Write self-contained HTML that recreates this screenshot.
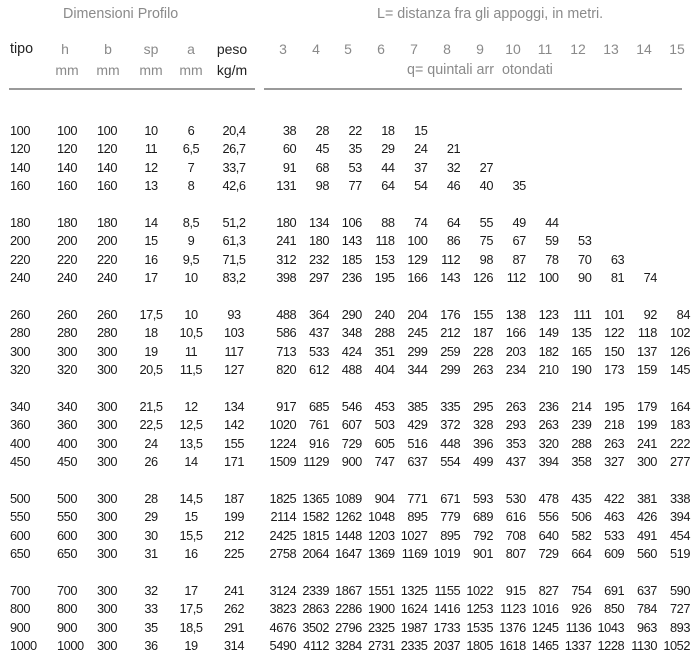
<!DOCTYPE html>
<html><head><meta charset="utf-8"><style>
body{margin:0;width:700px;height:658px;background:#fff;font-family:"Liberation Sans",sans-serif;position:relative;overflow:hidden}
.g{color:#8a8a8a}
.a{position:absolute;font-size:14.3px;line-height:16px;white-space:nowrap}
.c{position:absolute;font-size:14px;line-height:16px;width:40px;text-align:center}
table{position:absolute;left:0;top:122px;border-collapse:collapse;table-layout:fixed;width:690px;font-size:12.8px;color:#1a1a1a;letter-spacing:-0.45px}
td{padding:0;height:18.4px;line-height:18.4px;white-space:nowrap;text-align:right}
td:nth-child(1){text-align:left;padding-left:10px}
td:nth-child(2){text-align:left;padding-left:5px}
td:nth-child(3){text-align:left;padding-left:5px}
td:nth-child(4),td:nth-child(5),td:nth-child(6){text-align:center}
.hl{position:absolute;top:88px;height:1.5px;background:#9a9a9a}
</style></head><body>
<div class="a g" style="left:63px;top:6px">Dimensioni Profilo</div>
<div class="a g" style="left:377px;top:6px">L= distanza fra gli appoggi, in metri.</div>
<div class="a" style="left:10px;top:41px;color:#222">tipo</div>
<div class="c g" style="left:45px;top:41px">h</div>
<div class="c g" style="left:88px;top:41px">b</div>
<div class="c g" style="left:131px;top:41px">sp</div>
<div class="c g" style="left:171px;top:41px">a</div>
<div class="c" style="left:212px;top:41px;color:#222">peso</div>
<div class="c g" style="left:47px;top:62px">mm</div>
<div class="c g" style="left:88px;top:62px">mm</div>
<div class="c g" style="left:131px;top:62px">mm</div>
<div class="c g" style="left:171px;top:62px">mm</div>
<div class="c" style="left:212px;top:62px;color:#222">kg/m</div>
<div class="c g" style="left:263px;top:41px">3</div>
<div class="c g" style="left:296px;top:41px">4</div>
<div class="c g" style="left:328px;top:41px">5</div>
<div class="c g" style="left:361px;top:41px">6</div>
<div class="c g" style="left:394px;top:41px">7</div>
<div class="c g" style="left:427px;top:41px">8</div>
<div class="c g" style="left:460px;top:41px">9</div>
<div class="c g" style="left:493px;top:41px">10</div>
<div class="c g" style="left:525px;top:41px">11</div>
<div class="c g" style="left:558px;top:41px">12</div>
<div class="c g" style="left:591px;top:41px">13</div>
<div class="c g" style="left:624px;top:41px">14</div>
<div class="c g" style="left:657px;top:41px">15</div>
<div class="a g" style="left:407px;top:62px">q= quintali arr&nbsp;&nbsp;otondati</div>
<div class="hl" style="left:9px;width:246px"></div>
<div class="hl" style="left:264px;width:418px"></div>
<table>
<colgroup><col style="width:52px"><col style="width:40px"><col style="width:40px"><col style="width:38px"><col style="width:42px"><col style="width:44px"><col style="width:40.2px"><col style="width:32.8px"><col style="width:32.8px"><col style="width:32.8px"><col style="width:32.8px"><col style="width:32.8px"><col style="width:32.8px"><col style="width:32.8px"><col style="width:32.8px"><col style="width:32.8px"><col style="width:32.8px"><col style="width:32.8px"><col style="width:32.8px"></colgroup>
<tr><td>100</td><td>100</td><td>100</td><td>10</td><td>6</td><td>20,4</td><td>38</td><td>28</td><td>22</td><td>18</td><td>15</td><td></td><td></td><td></td><td></td><td></td><td></td><td></td><td></td></tr>
<tr><td>120</td><td>120</td><td>120</td><td>11</td><td>6,5</td><td>26,7</td><td>60</td><td>45</td><td>35</td><td>29</td><td>24</td><td>21</td><td></td><td></td><td></td><td></td><td></td><td></td><td></td></tr>
<tr><td>140</td><td>140</td><td>140</td><td>12</td><td>7</td><td>33,7</td><td>91</td><td>68</td><td>53</td><td>44</td><td>37</td><td>32</td><td>27</td><td></td><td></td><td></td><td></td><td></td><td></td></tr>
<tr><td>160</td><td>160</td><td>160</td><td>13</td><td>8</td><td>42,6</td><td>131</td><td>98</td><td>77</td><td>64</td><td>54</td><td>46</td><td>40</td><td>35</td><td></td><td></td><td></td><td></td><td></td></tr>
<tr><td colspan="19"></td></tr>
<tr><td>180</td><td>180</td><td>180</td><td>14</td><td>8,5</td><td>51,2</td><td>180</td><td>134</td><td>106</td><td>88</td><td>74</td><td>64</td><td>55</td><td>49</td><td>44</td><td></td><td></td><td></td><td></td></tr>
<tr><td>200</td><td>200</td><td>200</td><td>15</td><td>9</td><td>61,3</td><td>241</td><td>180</td><td>143</td><td>118</td><td>100</td><td>86</td><td>75</td><td>67</td><td>59</td><td>53</td><td></td><td></td><td></td></tr>
<tr><td>220</td><td>220</td><td>220</td><td>16</td><td>9,5</td><td>71,5</td><td>312</td><td>232</td><td>185</td><td>153</td><td>129</td><td>112</td><td>98</td><td>87</td><td>78</td><td>70</td><td>63</td><td></td><td></td></tr>
<tr><td>240</td><td>240</td><td>240</td><td>17</td><td>10</td><td>83,2</td><td>398</td><td>297</td><td>236</td><td>195</td><td>166</td><td>143</td><td>126</td><td>112</td><td>100</td><td>90</td><td>81</td><td>74</td><td></td></tr>
<tr><td colspan="19"></td></tr>
<tr><td>260</td><td>260</td><td>260</td><td>17,5</td><td>10</td><td>93</td><td>488</td><td>364</td><td>290</td><td>240</td><td>204</td><td>176</td><td>155</td><td>138</td><td>123</td><td>111</td><td>101</td><td>92</td><td>84</td></tr>
<tr><td>280</td><td>280</td><td>280</td><td>18</td><td>10,5</td><td>103</td><td>586</td><td>437</td><td>348</td><td>288</td><td>245</td><td>212</td><td>187</td><td>166</td><td>149</td><td>135</td><td>122</td><td>118</td><td>102</td></tr>
<tr><td>300</td><td>300</td><td>300</td><td>19</td><td>11</td><td>117</td><td>713</td><td>533</td><td>424</td><td>351</td><td>299</td><td>259</td><td>228</td><td>203</td><td>182</td><td>165</td><td>150</td><td>137</td><td>126</td></tr>
<tr><td>320</td><td>320</td><td>300</td><td>20,5</td><td>11,5</td><td>127</td><td>820</td><td>612</td><td>488</td><td>404</td><td>344</td><td>299</td><td>263</td><td>234</td><td>210</td><td>190</td><td>173</td><td>159</td><td>145</td></tr>
<tr><td colspan="19"></td></tr>
<tr><td>340</td><td>340</td><td>300</td><td>21,5</td><td>12</td><td>134</td><td>917</td><td>685</td><td>546</td><td>453</td><td>385</td><td>335</td><td>295</td><td>263</td><td>236</td><td>214</td><td>195</td><td>179</td><td>164</td></tr>
<tr><td>360</td><td>360</td><td>300</td><td>22,5</td><td>12,5</td><td>142</td><td>1020</td><td>761</td><td>607</td><td>503</td><td>429</td><td>372</td><td>328</td><td>293</td><td>263</td><td>239</td><td>218</td><td>199</td><td>183</td></tr>
<tr><td>400</td><td>400</td><td>300</td><td>24</td><td>13,5</td><td>155</td><td>1224</td><td>916</td><td>729</td><td>605</td><td>516</td><td>448</td><td>396</td><td>353</td><td>320</td><td>288</td><td>263</td><td>241</td><td>222</td></tr>
<tr><td>450</td><td>450</td><td>300</td><td>26</td><td>14</td><td>171</td><td>1509</td><td>1129</td><td>900</td><td>747</td><td>637</td><td>554</td><td>499</td><td>437</td><td>394</td><td>358</td><td>327</td><td>300</td><td>277</td></tr>
<tr><td colspan="19"></td></tr>
<tr><td>500</td><td>500</td><td>300</td><td>28</td><td>14,5</td><td>187</td><td>1825</td><td>1365</td><td>1089</td><td>904</td><td>771</td><td>671</td><td>593</td><td>530</td><td>478</td><td>435</td><td>422</td><td>381</td><td>338</td></tr>
<tr><td>550</td><td>550</td><td>300</td><td>29</td><td>15</td><td>199</td><td>2114</td><td>1582</td><td>1262</td><td>1048</td><td>895</td><td>779</td><td>689</td><td>616</td><td>556</td><td>506</td><td>463</td><td>426</td><td>394</td></tr>
<tr><td>600</td><td>600</td><td>300</td><td>30</td><td>15,5</td><td>212</td><td>2425</td><td>1815</td><td>1448</td><td>1203</td><td>1027</td><td>895</td><td>792</td><td>708</td><td>640</td><td>582</td><td>533</td><td>491</td><td>454</td></tr>
<tr><td>650</td><td>650</td><td>300</td><td>31</td><td>16</td><td>225</td><td>2758</td><td>2064</td><td>1647</td><td>1369</td><td>1169</td><td>1019</td><td>901</td><td>807</td><td>729</td><td>664</td><td>609</td><td>560</td><td>519</td></tr>
<tr><td colspan="19"></td></tr>
<tr><td>700</td><td>700</td><td>300</td><td>32</td><td>17</td><td>241</td><td>3124</td><td>2339</td><td>1867</td><td>1551</td><td>1325</td><td>1155</td><td>1022</td><td>915</td><td>827</td><td>754</td><td>691</td><td>637</td><td>590</td></tr>
<tr><td>800</td><td>800</td><td>300</td><td>33</td><td>17,5</td><td>262</td><td>3823</td><td>2863</td><td>2286</td><td>1900</td><td>1624</td><td>1416</td><td>1253</td><td>1123</td><td>1016</td><td>926</td><td>850</td><td>784</td><td>727</td></tr>
<tr><td>900</td><td>900</td><td>300</td><td>35</td><td>18,5</td><td>291</td><td>4676</td><td>3502</td><td>2796</td><td>2325</td><td>1987</td><td>1733</td><td>1535</td><td>1376</td><td>1245</td><td>1136</td><td>1043</td><td>963</td><td>893</td></tr>
<tr><td>1000</td><td>1000</td><td>300</td><td>36</td><td>19</td><td>314</td><td>5490</td><td>4112</td><td>3284</td><td>2731</td><td>2335</td><td>2037</td><td>1805</td><td>1618</td><td>1465</td><td>1337</td><td>1228</td><td>1130</td><td>1052</td></tr>
</table>
</body></html>
